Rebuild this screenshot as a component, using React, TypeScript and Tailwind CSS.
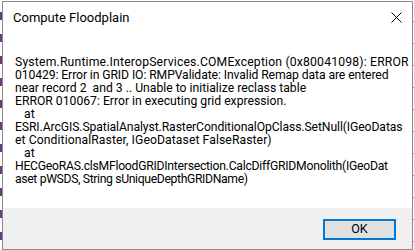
import React from "react"

// each line of the error text, with a tracking nudge so it ends where the original wraps
const lines: { text: string; track: string }[] = [
  { text: "System.Runtime.InteropServices.COMException (0x80041098): ERROR", track: "tracking-[0.18px]" },
  { text: "010429: Error in GRID IO: RMPValidate: Invalid Remap data are entered", track: "tracking-[-0.1px]" },
  { text: "near record 2  and 3 .. Unable to initialize reclass table", track: "tracking-[0px]" },
  { text: "ERROR 010067: Error in executing grid expression.", track: "tracking-[0px]" },
  { text: "   at", track: "tracking-[0px]" },
  { text: "ESRI.ArcGIS.SpatialAnalyst.RasterConditionalOpClass.SetNull(IGeoDatas", track: "tracking-[-0.1px]" },
  { text: "et ConditionalRaster, IGeoDataset FalseRaster)", track: "tracking-[0.08px]" },
  { text: "   at", track: "tracking-[0px]" },
  { text: "HECGeoRAS.clsMFloodGRIDIntersection.CalcDiffGRIDMonolith(IGeoDat", track: "tracking-[-0.25px]" },
  { text: "aset pWSDS, String sUniqueDepthGRIDName)", track: "tracking-[-0.35px]" },
]

const CloseIcon = () => (
  <svg width="11" height="11" viewBox="0 0 11 11">
    <path d="M0.5 0.5 L10.5 10.5 M10.5 0.5 L0.5 10.5" stroke="#000" strokeWidth="1" fill="none" />
  </svg>
)

export default function App() {
  return (
    <div className="flex h-[250px] w-[414px] overflow-hidden bg-white font-['Roboto',sans-serif]">
      {/* spreadsheet behind the dialog */}
      <div className="w-[2px] shrink-0 bg-[repeating-linear-gradient(to_bottom,#fff_0px,#fff_12px,#6b3a7a_12px,#6b3a7a_20px,#fff_20px,#fff_22px)]" />
      <div className="flex flex-col pt-[1px]">
        <div className="flex h-[250px] w-[411px] flex-col border border-[#8a8a8a] bg-white">
          <div className="flex h-[31px] items-center justify-between pl-[10px] pr-[10px]">
            <span className="text-[13px] text-black">Compute Floodplain</span>
            <CloseIcon />
          </div>
          <div className="h-[175px] px-[12px] pt-[23px]">
            {lines.map((l, i) => (
              <div key={i} className={`whitespace-pre text-[12.2px] leading-[13px] text-black ${l.track}`}>
                {l.text}
              </div>
            ))}
          </div>
          <div className="flex flex-1 items-start justify-end bg-[#f0f0f0] pr-[16px] pt-[11px]">
            <button className="flex h-[21px] w-[73px] items-center justify-center border-2 border-[#0078d7] bg-[#e1e1e1] text-[12.5px] text-black">
              OK
            </button>
          </div>
        </div>
      </div>
      <div className="w-[1px] shrink-0 bg-[repeating-linear-gradient(to_bottom,#fff_0px,#fff_21px,#a0a0a0_21px,#a0a0a0_22px)]" />
    </div>
  )
}
